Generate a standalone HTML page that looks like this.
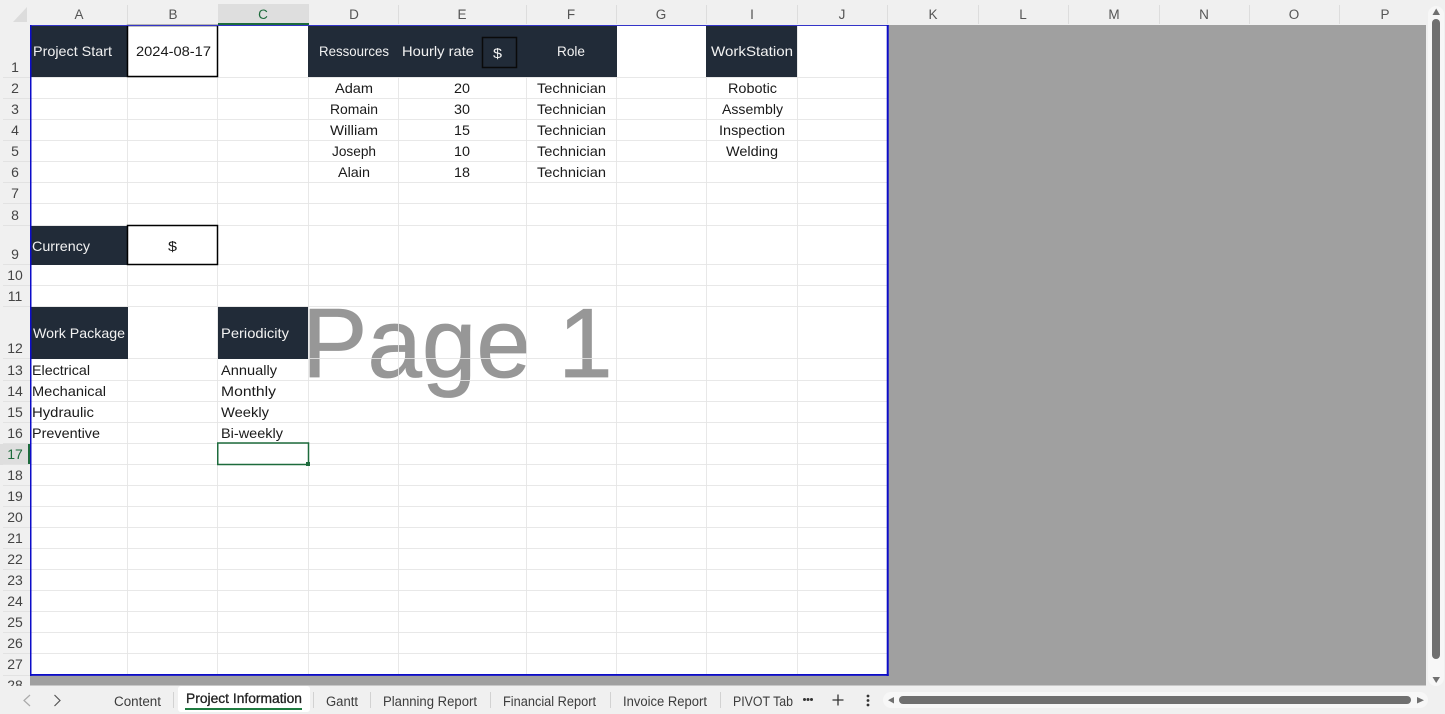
<!DOCTYPE html>
<html><head><meta charset="utf-8"><title>Project Information</title>
<style>
html,body{margin:0;padding:0;width:1445px;height:714px;overflow:hidden;background:#f0f0f0}
svg{display:block}
text{font-family:"Liberation Sans",sans-serif;font-size:14px;fill:#1a1a1a}
.h{fill:#555;font-size:13.5px;text-anchor:middle}
.r{fill:#444;font-size:14px;text-anchor:middle}
.w{fill:#f2f2f2}
.t{fill:#3c3c3c;font-size:13.5px}
</style></head><body>
<svg width="1445" height="714" viewBox="0 0 1445 714" xmlns="http://www.w3.org/2000/svg">
<rect width="1445" height="714" fill="#f0f0f0"/>
<!-- sheet area -->
<rect x="30" y="25" width="1396" height="660.500" fill="#a0a0a0"/>
<rect x="30" y="25" width="857" height="650" fill="#fff"/>
<!-- column header -->
<polygon points="13,22 27,22 27,7" fill="#dcdcdc"/>
<rect x="218" y="4" width="91" height="20" fill="#dedede"/>
<g stroke="#dddddd" stroke-width="1">
<path d="M127.500 5V24M308.500 5V24M398.500 5V24M526.500 5V24M616.500 5V24M706.500 5V24M797.500 5V24M887.500 5V24M978.500 5V24M1068.500 5V24M1159.500 5V24M1249.500 5V24M1339.500 5V24"/>
</g>
<rect x="218" y="23" width="91" height="2" fill="#1d6b3c"/>
<g class="hh">
<text class="h" x="79" y="19">A</text><text class="h" x="173" y="19">B</text><text class="h" x="263" y="19" style="fill:#1d6b3c">C</text><text class="h" x="354" y="19">D</text><text class="h" x="462" y="19">E</text><text class="h" x="571" y="19">F</text><text class="h" x="661" y="19">G</text><text class="h" x="752" y="19">I</text><text class="h" x="842" y="19">J</text><text class="h" x="933" y="19">K</text><text class="h" x="1023" y="19">L</text><text class="h" x="1114" y="19">M</text><text class="h" x="1204" y="19">N</text><text class="h" x="1294" y="19">O</text><text class="h" x="1385" y="19">P</text>
</g>
<!-- row header -->
<rect x="0" y="444" width="29" height="21" fill="#dedede"/>
<rect x="28" y="444" width="2" height="21" fill="#1d6b3c"/>
<g stroke="#e2e2e2"><path d="M3 77.500H30M3 98.500H30M3 119.500H30M3 140.500H30M3 161.500H30M3 182.500H30M3 203.500H30M3 225.500H30M3 264.500H30M3 285.500H30M3 306.500H30M3 358.500H30M3 380.500H30M3 401.500H30M3 422.500H30M3 443.500H30M3 464.500H30M3 485.500H30M3 506.500H30M3 527.500H30M3 548.500H30M3 569.500H30M3 590.500H30M3 611.500H30M3 632.500H30M3 653.500H30M3 675.500H30"/></g>
<text class="r" x="15" y="72">1</text><text class="r" x="15" y="93">2</text><text class="r" x="15" y="114">3</text><text class="r" x="15" y="135">4</text><text class="r" x="15" y="156">5</text><text class="r" x="15" y="177">6</text><text class="r" x="15" y="198">7</text><text class="r" x="15" y="220">8</text><text class="r" x="15" y="259">9</text><text class="r" x="15" y="280">10</text><text class="r" x="15" y="301">11</text><text class="r" x="15" y="353">12</text><text class="r" x="15" y="375">13</text><text class="r" x="15" y="396">14</text><text class="r" x="15" y="417">15</text><text class="r" x="15" y="438">16</text><text class="r" x="15" y="459" style="fill:#1d6b3c">17</text><text class="r" x="15" y="480">18</text><text class="r" x="15" y="501">19</text><text class="r" x="15" y="522">20</text><text class="r" x="15" y="543">21</text><text class="r" x="15" y="564">22</text><text class="r" x="15" y="585">23</text><text class="r" x="15" y="606">24</text><text class="r" x="15" y="627">25</text><text class="r" x="15" y="648">26</text><text class="r" x="15" y="669">27</text>
<text class="r" x="15" y="690">28</text>
<rect x="0" y="686" width="1445" height="28" fill="#f0f0f0"/>
<!-- watermark -->
<text x="302" y="377" style="font-size:98px;fill:#979797;stroke:#979797;stroke-width:.8">Page 1</text>
<!-- grid -->
<g stroke="#e4e4e4" stroke-opacity=".85" stroke-width="1">
<path d="M127.500 25V675M217.500 25V675M308.500 25V675M398.500 25V675M526.500 25V675M616.500 25V675M706.500 25V675M797.500 25V675"/>
<path d="M30 77.500H887M30 98.500H887M30 119.500H887M30 140.500H887M30 161.500H887M30 182.500H887M30 203.500H887M30 225.500H887M30 264.500H887M30 285.500H887M30 306.500H887M30 358.500H887M30 380.500H887M30 401.500H887M30 422.500H887M30 443.500H887M30 464.500H887M30 485.500H887M30 506.500H887M30 527.500H887M30 548.500H887M30 569.500H887M30 590.500H887M30 611.500H887M30 632.500H887M30 653.500H887"/>
</g>
<!-- dark header cells -->
<g fill="#212b38">
<rect x="30" y="25" width="97" height="52"/>
<rect x="308" y="25" width="309" height="52"/>
<rect x="706" y="25" width="91" height="52"/>
<rect x="30" y="226" width="97" height="39"/>
<rect x="30" y="307" width="98" height="52"/>
<rect x="218" y="307" width="90" height="52"/>
</g>
<!-- boxed cells -->
<rect x="127.500" y="25.500" width="90" height="51" fill="#fff" stroke="#000" stroke-width="1.500"/>
<rect x="127.500" y="225.500" width="90" height="39" fill="#fff" stroke="#000" stroke-width="1.500"/>
<rect x="482.500" y="37.500" width="34" height="30" fill="#212b38" stroke="#0a0a0a" stroke-width="1.500"/>
<!-- header text -->
<text class="w" x="33" y="56" textLength="79" lengthAdjust="spacingAndGlyphs">Project Start</text>
<text x="136" y="56" textLength="75" lengthAdjust="spacingAndGlyphs">2024-08-17</text>
<text class="w" x="319" y="56" textLength="70" lengthAdjust="spacingAndGlyphs">Ressources</text>
<text class="w" x="402" y="56" textLength="72" lengthAdjust="spacingAndGlyphs">Hourly rate</text>
<text class="w" x="493" y="58" textLength="9" lengthAdjust="spacingAndGlyphs">$</text>
<text class="w" x="557" y="56" textLength="28" lengthAdjust="spacingAndGlyphs">Role</text>
<text class="w" x="711" y="56" textLength="82" lengthAdjust="spacingAndGlyphs">WorkStation</text>
<text class="w" x="32" y="251" textLength="58" lengthAdjust="spacingAndGlyphs">Currency</text>
<text x="168" y="251" textLength="9" lengthAdjust="spacingAndGlyphs">$</text>
<text class="w" x="33" y="338" textLength="92" lengthAdjust="spacingAndGlyphs">Work Package</text>
<text class="w" x="221" y="338" textLength="68" lengthAdjust="spacingAndGlyphs">Periodicity</text>
<!-- body text -->
<text x="335" y="93" textLength="38" lengthAdjust="spacingAndGlyphs">Adam</text>
<text x="330" y="114" textLength="48" lengthAdjust="spacingAndGlyphs">Romain</text>
<text x="330" y="135" textLength="48" lengthAdjust="spacingAndGlyphs">William</text>
<text x="332" y="156" textLength="44" lengthAdjust="spacingAndGlyphs">Joseph</text>
<text x="338" y="177" textLength="32" lengthAdjust="spacingAndGlyphs">Alain</text>
<text x="454" y="93" textLength="16" lengthAdjust="spacingAndGlyphs">20</text>
<text x="454" y="114" textLength="16" lengthAdjust="spacingAndGlyphs">30</text>
<text x="454" y="135" textLength="16" lengthAdjust="spacingAndGlyphs">15</text>
<text x="454" y="156" textLength="16" lengthAdjust="spacingAndGlyphs">10</text>
<text x="454" y="177" textLength="16" lengthAdjust="spacingAndGlyphs">18</text>
<text x="537" y="93" textLength="69" lengthAdjust="spacingAndGlyphs">Technician</text>
<text x="537" y="114" textLength="69" lengthAdjust="spacingAndGlyphs">Technician</text>
<text x="537" y="135" textLength="69" lengthAdjust="spacingAndGlyphs">Technician</text>
<text x="537" y="156" textLength="69" lengthAdjust="spacingAndGlyphs">Technician</text>
<text x="537" y="177" textLength="69" lengthAdjust="spacingAndGlyphs">Technician</text>
<text x="728" y="93" textLength="49" lengthAdjust="spacingAndGlyphs">Robotic</text>
<text x="722" y="114" textLength="61" lengthAdjust="spacingAndGlyphs">Assembly</text>
<text x="719" y="135" textLength="66" lengthAdjust="spacingAndGlyphs">Inspection</text>
<text x="726" y="156" textLength="52" lengthAdjust="spacingAndGlyphs">Welding</text>
<text x="32" y="375" textLength="58" lengthAdjust="spacingAndGlyphs">Electrical</text>
<text x="32" y="396" textLength="74" lengthAdjust="spacingAndGlyphs">Mechanical</text>
<text x="32" y="417" textLength="62" lengthAdjust="spacingAndGlyphs">Hydraulic</text>
<text x="32" y="438" textLength="68" lengthAdjust="spacingAndGlyphs">Preventive</text>
<text x="221" y="375" textLength="56" lengthAdjust="spacingAndGlyphs">Annually</text>
<text x="221" y="396" textLength="55" lengthAdjust="spacingAndGlyphs">Monthly</text>
<text x="221" y="417" textLength="48" lengthAdjust="spacingAndGlyphs">Weekly</text>
<text x="221" y="438" textLength="62" lengthAdjust="spacingAndGlyphs">Bi-weekly</text>
<!-- selection -->
<rect x="217.750" y="443" width="90.750" height="21.500" fill="none" stroke="#1d6b3c" stroke-width="1.500"/>
<rect x="306" y="462" width="4" height="4" fill="#1d6b3c"/>
<!-- print area border -->
<rect x="30" y="25" width="858.700" height="1" fill="#3434c8"/>
<rect x="30" y="25" width="1.500" height="651" fill="#0c0cc8"/>
<rect x="886.700" y="25" width="2" height="651" fill="#0c0cc8"/>
<rect x="30" y="674" width="858.700" height="1.800" fill="#0c0cc8"/>
<!-- tab bar -->
<path d="M30 695L24 700.500L30 706" stroke="#aaa" stroke-width="1.200" fill="none"/>
<path d="M54.500 695L60 700.500L54.500 706" stroke="#555" stroke-width="1.200" fill="none"/>
<rect x="178" y="686" width="132" height="26" rx="3" fill="#fff"/>
<rect x="185" y="708" width="117" height="2" fill="#1d7a3f"/>
<g stroke="#d2d2d2"><path d="M173.500 692V708M313.500 692V708M370.500 692V708M490.500 692V708M610.500 692V708M720.500 692V708"/></g>
<text class="t" x="114" y="706" textLength="47" lengthAdjust="spacingAndGlyphs">Content</text>
<text class="t" x="186" y="703" textLength="116" lengthAdjust="spacingAndGlyphs" style="fill:#222;stroke:#222;stroke-width:.3">Project Information</text>
<text class="t" x="326" y="706" textLength="32" lengthAdjust="spacingAndGlyphs">Gantt</text>
<text class="t" x="383" y="706" textLength="94" lengthAdjust="spacingAndGlyphs">Planning Report</text>
<text class="t" x="503" y="706" textLength="93" lengthAdjust="spacingAndGlyphs">Financial Report</text>
<text class="t" x="623" y="706" textLength="84" lengthAdjust="spacingAndGlyphs">Invoice Report</text>
<text class="t" x="733" y="706" textLength="60" lengthAdjust="spacingAndGlyphs">PIVOT Tab</text>
<g fill="#333"><circle cx="804.500" cy="699.500" r="1.500"/><circle cx="808" cy="699.500" r="1.500"/><circle cx="811.500" cy="699.500" r="1.500"/>
<circle cx="868" cy="696" r="1.400"/><circle cx="868" cy="700.500" r="1.400"/><circle cx="868" cy="705" r="1.400"/></g>
<path d="M832.500 700H843.500M838 694.500V705.500" stroke="#333" stroke-width="1.300"/>
<!-- horizontal scrollbar -->
<rect x="883" y="692" width="545" height="16" rx="8" fill="#f7f7f7"/>
<polygon points="894,697 894,703.500 888,700.200" fill="#707070"/>
<rect x="899" y="696" width="512" height="8" rx="4" fill="#6f6f6f"/>
<polygon points="1417,697 1417,703.500 1424,700.200" fill="#707070"/>
<!-- vertical scrollbar -->
<rect x="1428" y="6" width="16" height="680" rx="8" fill="#f7f7f7"/>
<polygon points="1432.500,15 1440,15 1436.200,8.500" fill="#707070"/>
<rect x="1432" y="19" width="8" height="640" rx="4" fill="#6f6f6f"/>
<polygon points="1432.500,677 1440,677 1436.200,683" fill="#707070"/>
</svg>
</body></html>
